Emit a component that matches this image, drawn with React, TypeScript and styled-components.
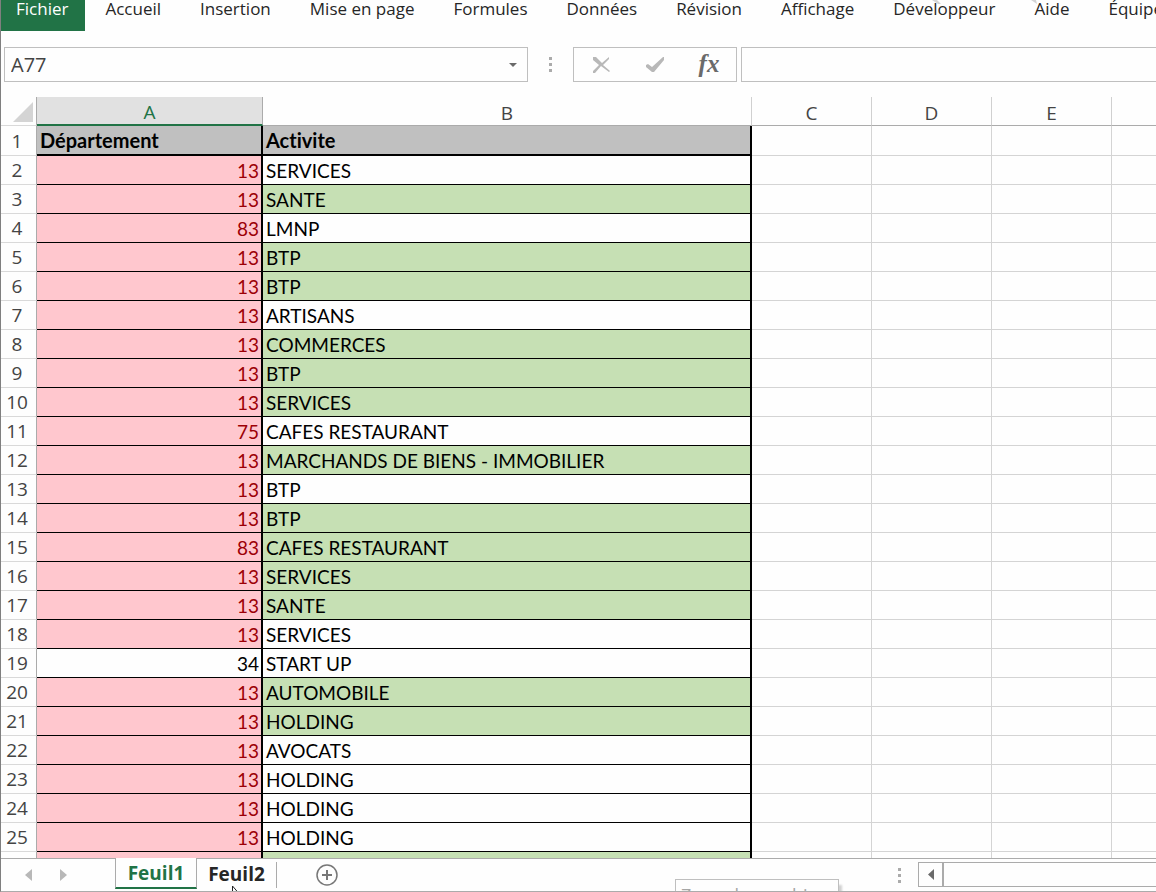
import React from 'react';
import styled, { createGlobalStyle, css } from 'styled-components';

const ui = '"Open Sans", "Noto Sans", sans-serif';
const cellFont = 'Lato, "Open Sans", sans-serif';
const line = '#ababab';

const GlobalStyle = createGlobalStyle`
  *, *::before, *::after { box-sizing: border-box; }
  body { margin: 0; background: #fefefe; color: #444; font-family: ${ui}; }
  button, input { font: inherit; color: inherit; }
`;

const Workbook = styled.div`
  display: flex;
  flex-direction: column;
  height: 100vh;
  overflow: hidden;
  border-left: 1px solid #7f7f7f;
  border-bottom: 1px solid ${line};
`;

const Ribbon = styled.nav`
  position: relative;
  display: flex;
  flex: none;
  gap: 1px;
  overflow: hidden;
`;

const RibbonTab = styled.button<{ $file?: boolean }>`
  flex: none;
  height: 31px;
  padding: 0 19px 13px;
  border: 0;
  background: none;
  color: #262626;
  font-size: 17px;
  line-height: 18px;
  white-space: nowrap;
  ${(p) =>
    p.$file &&
    css`
      padding: 0 17px 13px 15px;
      background: #217346;
      color: #fff;
    `}
`;

const RibbonMark = styled.svg`
  position: absolute;
  top: 0;
  left: 931px;
`;

const FormulaBar = styled.div`
  display: flex;
  flex: none;
  height: 35px;
  margin: 16px 0 15px 3px;
`;

const NameBox = styled.div`
  display: flex;
  align-items: center;
  flex: 0 0 524px;
  border: 1px solid #bfbfbf;
`;

const NameInput = styled.input`
  flex: 1;
  min-width: 0;
  padding: 0 6px;
  border: 0;
  outline: 0;
  background: none;
  font-size: 20px;
`;

const IconButton = styled.button`
  display: flex;
  align-items: center;
  justify-content: center;
  flex: 1;
  padding: 0;
  border: 0;
  background: none;
`;

const DropButton = styled(IconButton)`
  flex: 0 0 28px;
  height: 100%;
`;

const FunctionButton = styled(IconButton)`
  padding-bottom: 2px;
  color: #6a6a6a;
  font-family: "Liberation Serif", serif;
  font-size: 25px;
  font-style: italic;
  font-weight: 700;
  line-height: 28px;
`;

const Grip = styled.div<{ $width: number }>`
  display: flex;
  align-items: center;
  justify-content: center;
  flex: none;
  width: ${(p) => p.$width}px;
`;

const FormulaActions = styled.div`
  display: flex;
  flex: 0 0 164px;
  margin-right: 4px;
  border: 1px solid #bfbfbf;
`;

const FormulaInput = styled.input`
  flex: 1;
  min-width: 0;
  padding: 0 8px;
  border: 1px solid #bfbfbf;
  border-right: 0;
  outline: 0;
  background: none;
  font-size: 20px;
`;

const SheetArea = styled.main`
  flex: 1;
  min-height: 0;
  overflow: hidden;
`;

const Sheet = styled.table`
  width: 100%;
  table-layout: fixed;
  border-collapse: separate;
  border-spacing: 0;

  th:last-child,
  td:last-child {
    border-right: 0;
  }
`;

const Corner = styled.th`
  height: 29px;
  padding: 0 3px 3px 0;
  border-bottom: 1px solid #d9d9d9;
  border-right: 1px solid ${line};
  line-height: 0;
  text-align: right;
  vertical-align: bottom;
`;

const ColumnHead = styled.th<{ $selected?: boolean }>`
  height: 29px;
  padding: 4px 0 0;
  border-bottom: 1px solid ${line};
  border-right: 1px solid #d0d0d0;
  font-size: 19px;
  font-weight: 400;
  line-height: 24px;
  ${(p) =>
    p.$selected &&
    css`
      padding-top: 3px;
      border-bottom: 2px solid #217346;
      border-right-color: ${line};
      background: #e1e1e1;
      color: #217346;
    `}
`;

const RowHead = styled.th`
  padding: 0 3px 0 0;
  border-right: 1px solid ${line};
  border-bottom: 1px solid #d9d9d9;
  font-size: 19px;
  font-weight: 400;
  line-height: 28px;
`;

const Row = styled.tr`
  height: 29px;
  &:first-child {
    height: 30px;
  }
`;

const Cell = styled.td`
  padding: 0;
  border-right: 1px solid #d4d4d4;
  border-bottom: 1px solid #d4d4d4;
`;

const DataCell = styled.td<{ $fill?: string; $number?: boolean; $ink?: string }>`
  padding: ${(p) => (p.$number ? '2px 2px 0 0' : '2px 0 0 3px')};
  border-right: 2px solid #000;
  border-bottom: 1px solid #000;
  background: ${(p) => p.$fill ?? 'transparent'};
  color: ${(p) => p.$ink ?? '#000'};
  font-family: ${cellFont};
  font-size: 19px;
  font-variant-ligatures: none;
  line-height: 26px;
  text-align: ${(p) => (p.$number ? 'right' : 'left')};
  white-space: nowrap;
`;

const TitleCell = styled(DataCell)`
  padding-top: 0;
  border-bottom-width: 2px;
  font-size: 20px;
  font-weight: 700;
  line-height: 28px;
`;

const BottomBar = styled.footer`
  position: relative;
  display: flex;
  flex: none;
  height: 33px;
  border-top: 1px solid ${line};
`;

const SheetNav = styled.div`
  display: flex;
  flex: 0 0 114px;
  padding: 0 34px 0 10px;
`;

const SheetTab = styled.button<{ $active?: boolean }>`
  flex: 0 0 79px;
  height: 30px;
  padding: 0;
  border: 0;
  background: none;
  color: #262626;
  font-size: 19px;
  font-weight: 700;
  line-height: 28px;
  ${(p) =>
    p.$active &&
    css`
      flex-basis: 82px;
      height: 31px;
      margin-top: -1px;
      border: solid ${line};
      border-width: 0 1px;
      border-bottom: 2px solid #217346;
      background: #fefefe;
      color: #217346;
    `}
`;

const TabDivider = styled.div`
  width: 1px;
  height: 26px;
  margin-top: 3px;
  background: ${line};
`;

const AddSheet = styled(IconButton)`
  flex: 0 0 100px;
`;

const Spacer = styled.div`
  flex: 1;
`;

const ScrollBar = styled.div`
  display: flex;
  flex: 0 0 238px;
  height: 25px;
  margin-top: 3px;
  border: 1px solid ${line};
  border-right: 0;
`;

const ScrollLeft = styled(IconButton)`
  flex: 0 0 25px;
  border-right: 2px solid ${line};
`;

const Tooltip = styled.div`
  position: absolute;
  top: 20px;
  left: 674px;
  padding: 0 5px;
  width: 164px;
  border: 1px solid #bfbfbf;
  background: #fefefe;
  box-shadow: 3px 6px 2px #d0d0d0;
  color: #a6a6a6;
  font-size: 18px;
  line-height: 30px;
  white-space: nowrap;
`;

const Pointer = styled.svg`
  position: absolute;
  top: 26px;
  left: 230px;
`;

const Dots = () => (
  <svg width="3" height="15" aria-hidden="true" fill="#ababab">
    <path d="M0 0h3v3H0zM0 6h3v3H0zM0 12h3v3H0z" />
  </svg>
);

const menu = ['Accueil', 'Insertion', 'Mise en page', 'Formules', 'Données', 'Révision', 'Affichage', 'Développeur', 'Aide', 'Équipe'];

const records: [number, string, boolean][] = [
  [13, 'SERVICES', false],
  [13, 'SANTE', true],
  [83, 'LMNP', false],
  [13, 'BTP', true],
  [13, 'BTP', true],
  [13, 'ARTISANS', false],
  [13, 'COMMERCES', true],
  [13, 'BTP', true],
  [13, 'SERVICES', true],
  [75, 'CAFES RESTAURANT', false],
  [13, 'MARCHANDS DE BIENS - IMMOBILIER', true],
  [13, 'BTP', false],
  [13, 'BTP', true],
  [83, 'CAFES RESTAURANT', true],
  [13, 'SERVICES', true],
  [13, 'SANTE', true],
  [13, 'SERVICES', false],
  [34, 'START UP', false],
  [13, 'AUTOMOBILE', true],
  [13, 'HOLDING', true],
  [13, 'AVOCATS', false],
  [13, 'HOLDING', false],
  [13, 'HOLDING', false],
  [13, 'HOLDING', false],
];

const EmptyCells = () => (
  <>
    <Cell />
    <Cell />
    <Cell />
    <Cell />
  </>
);

export default function App() {
  return (
    <Workbook>
      <GlobalStyle />
      <Ribbon aria-label="Ruban">
        <RibbonTab $file>Fichier</RibbonTab>
        {menu.map((m) => (
          <RibbonTab key={m}>{m}</RibbonTab>
        ))}
        <RibbonMark width="106" height="4" fill="#d4d4d4" aria-hidden="true">
          <path d="M0 0h5l4 4H6zM99 0h5l1 4z" />
        </RibbonMark>
      </Ribbon>
      <FormulaBar>
        <NameBox>
          <NameInput aria-label="Zone Nom" defaultValue="A77" />
          <DropButton aria-label="Liste des noms">
            <svg width="8" height="4" fill="#6a6a6a"><path d="M0 0h8L4 4z" /></svg>
          </DropButton>
        </NameBox>
        <Grip $width={45}><Dots /></Grip>
        <FormulaActions>
          <IconButton aria-label="Annuler">
            <svg width="18" height="17" fill="#b8b8b8"><path d="M1 1h3l6 6 7-6v2l-6 6 7 6-1 1-8-6-6 7H1v-2l6-6-6-5z" /></svg>
          </IconButton>
          <IconButton aria-label="Entrer">
            <svg width="20" height="17" fill="#b8b8b8"><path d="M1 9l2-1 4 3L18 1h1v3L9 16H7L1 11z" /></svg>
          </IconButton>
          <FunctionButton aria-label="Insérer une fonction">fx</FunctionButton>
        </FormulaActions>
        <FormulaInput aria-label="Barre de formule" />
      </FormulaBar>
      <SheetArea>
        <Sheet>
          <colgroup>
            <col style={{ width: 36 }} />
            <col style={{ width: 226 }} />
            <col style={{ width: 489 }} />
            <col style={{ width: 120 }} />
            <col style={{ width: 120 }} />
            <col style={{ width: 120 }} />
            <col />
          </colgroup>
          <thead>
            <tr>
              <Corner><svg width="20" height="20" fill="#d4d4d4"><path d="M20 0v20H0z" /></svg></Corner>
              <ColumnHead $selected>A</ColumnHead>
              <ColumnHead>B</ColumnHead>
              <ColumnHead>C</ColumnHead>
              <ColumnHead>D</ColumnHead>
              <ColumnHead>E</ColumnHead>
              <ColumnHead />
            </tr>
          </thead>
          <tbody>
            <Row>
              <RowHead>1</RowHead>
              <TitleCell $fill="#c0c0c0">Département</TitleCell>
              <TitleCell $fill="#c0c0c0">Activite</TitleCell>
              <EmptyCells />
            </Row>
            {records.map(([dep, act, green], i) => (
              <Row key={i}>
                <RowHead>{i + 2}</RowHead>
                <DataCell $number $fill={dep === 34 ? undefined : '#ffc7ce'} $ink={dep === 34 ? undefined : '#9c0006'}>{dep}</DataCell>
                <DataCell $fill={green ? '#c6e0b4' : undefined}>{act}</DataCell>
                <EmptyCells />
              </Row>
            ))}
            <Row>
              <RowHead />
              <DataCell $fill="#ffc7ce" />
              <DataCell $fill="#c6e0b4" />
              <EmptyCells />
            </Row>
          </tbody>
        </Sheet>
      </SheetArea>
      <BottomBar>
        <SheetNav>
          <IconButton aria-label="Feuille précédente"><svg width="7" height="12" fill="#b8b8b8"><path d="M7 0v12L0 6z" /></svg></IconButton>
          <IconButton aria-label="Feuille suivante"><svg width="7" height="12" fill="#b8b8b8"><path d="M0 0v12l7-6z" /></svg></IconButton>
        </SheetNav>
        <SheetTab $active>Feuil1</SheetTab>
        <SheetTab>Feuil2</SheetTab>
        <TabDivider />
        <AddSheet aria-label="Nouvelle feuille">
          <svg width="22" height="22" fill="none" stroke="#777"><circle cx="11" cy="11" r="10" strokeWidth="1.5" /><path d="M11 6v10M6 11h10" strokeWidth="2" /></svg>
        </AddSheet>
        <Spacer />
        <Grip $width={38}><Dots /></Grip>
        <ScrollBar>
          <ScrollLeft aria-label="Défiler vers la gauche"><svg width="6" height="11" fill="#6a6a6a"><path d="M6 0v11L0 5.500z" /></svg></ScrollLeft>
        </ScrollBar>
        <Tooltip>Zone de graphique</Tooltip>
        <Pointer width="12" height="19" fill="#fff" stroke="#222"><path d="M1.500 1v15l3.500-3 3 6 2-1-3-6h4z" /></Pointer>
      </BottomBar>
    </Workbook>
  );
}
